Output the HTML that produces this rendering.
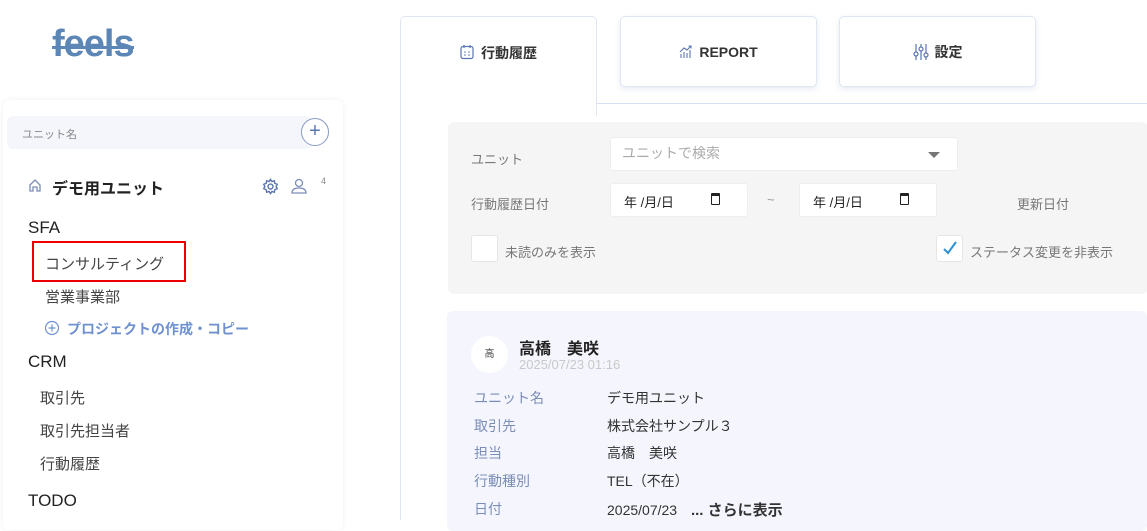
<!DOCTYPE html>
<html><head><meta charset="utf-8"><style>
*{box-sizing:border-box;margin:0;padding:0}
body{width:1147px;height:520px;overflow:hidden;background:#fff;font-family:"Liberation Sans","Noto Sans CJK JP",sans-serif;color:#333;position:relative}
.a{position:absolute;white-space:nowrap}
.side{position:absolute;left:3px;top:100px;width:340px;height:430px;background:#fff;border-radius:6px;box-shadow:0 0 6px rgba(0,0,0,.06)}
.tab{position:absolute;top:16px;width:197px;height:71px;background:#fff;border:1px solid #dfe6f2;border-radius:5px;box-shadow:0 2px 6px rgba(120,140,180,.18);font-size:14px;display:flex;align-items:center;justify-content:center;gap:6px;color:#333;font-weight:bold}
.lbl{color:#7a8db8;font-size:14px}
.val{font-size:14px;color:#333}
.inp{position:absolute;background:#fff;border:1px solid #eceef2;border-radius:3px}
</style></head><body>
<div class="a" style="left:52px;top:24px;font-size:38px;font-weight:bold;color:#5b86b5;letter-spacing:-1px;line-height:40px">feels</div>
<div class="a" style="left:52px;top:46px;width:82px;height:3px;background:#5b86b5"></div>

<div class="side">
 <div class="a" style="left:4px;top:16px;width:305px;height:33px;background:#f4f6fc;border-radius:6px"></div>
 <div class="a" style="left:19px;top:26px;font-size:11px;color:#888">ユニット名</div>
 <div class="a" style="left:298px;top:18px;width:28px;height:28px;border:1px solid #8a9cc6;border-radius:50%;background:#fff;color:#5b76b0;font-size:20px;text-align:center;line-height:25px">+</div>
 <svg class="a" style="left:25px;top:78px" width="14" height="14" viewBox="0 0 14 14"><path d="M2 7 L7 2 L12 7 V13 H9 V9 H5 V13 H2Z" fill="none" stroke="#7a8db8" stroke-width="1.3"/></svg>
 <div class="a" style="left:49px;top:75px;font-size:16px;font-weight:bold;color:#222">デモ用ユニット</div>
 <svg class="a" style="left:259px;top:78px" width="17" height="17" viewBox="0 0 24 24"><path d="M12 2 L14 5 L17.5 4 L18 7.5 L21.5 9 L20 12 L21.5 15 L18 16.5 L17.5 20 L14 19 L12 22 L10 19 L6.5 20 L6 16.5 L2.5 15 L4 12 L2.5 9 L6 7.5 L6.5 4 L10 5Z" fill="none" stroke="#5b76b0" stroke-width="2"/><circle cx="12" cy="12" r="3.5" fill="none" stroke="#5b76b0" stroke-width="2"/></svg>
 <svg class="a" style="left:287px;top:77px" width="18" height="18" viewBox="0 0 18 18"><circle cx="9" cy="6" r="3.5" fill="none" stroke="#7a8db8" stroke-width="1.3"/><path d="M2 16 Q2 11 9 11 Q16 11 16 16Z" fill="none" stroke="#7a8db8" stroke-width="1.3"/></svg>
 <div class="a" style="left:318px;top:76px;font-size:9px;color:#888">4</div>
 <div class="a" style="left:25px;top:118px;font-size:17px;color:#222">SFA</div>
 <div class="a" style="left:29px;top:141px;width:154px;height:41px;border:2px solid #e00"></div>
 <div class="a" style="left:42px;top:153px;font-size:15px;color:#444">コンサルティング</div>
 <div class="a" style="left:42px;top:186px;font-size:15px;color:#444">営業事業部</div>
 <svg class="a" style="left:41px;top:220px" width="16" height="16" viewBox="0 0 16 16"><circle cx="8" cy="8" r="6.5" fill="none" stroke="#6f92cf" stroke-width="1.2"/><path d="M8 4.5V11.5M4.5 8H11.5" stroke="#6f92cf" stroke-width="1.2"/></svg>
 <div class="a" style="left:64px;top:219px;font-size:14px;color:#6f92cf;font-weight:bold">プロジェクトの作成・コピー</div>
 <div class="a" style="left:25px;top:252px;font-size:17px;color:#222">CRM</div>
 <div class="a" style="left:37px;top:287px;font-size:15px;color:#444">取引先</div>
 <div class="a" style="left:37px;top:320px;font-size:15px;color:#444">取引先担当者</div>
 <div class="a" style="left:37px;top:353px;font-size:15px;color:#444">行動履歴</div>
 <div class="a" style="left:25px;top:391px;font-size:17px;color:#222">TODO</div>
</div>

<div class="a" style="left:400px;top:16px;width:197px;height:100px;background:#fff;border:1px solid #dfe6f2;border-bottom:none;border-radius:5px 5px 0 0"></div>
<div class="a" style="left:596px;top:103px;width:551px;height:1px;background:#d6e0f0"></div>
<div class="a" style="left:400px;top:116px;width:1px;height:404px;background:#dfe6f2"></div>
<svg class="a" style="left:460px;top:44px" width="14" height="16" viewBox="0 0 14 16"><rect x="1" y="2.5" width="12" height="12" rx="2" fill="none" stroke="#5b76b0" stroke-width="1.2"/><path d="M4 1V4M10 1V4" stroke="#5b76b0" stroke-width="1.2"/><circle cx="5" cy="8" r=".8" fill="#5b76b0"/><circle cx="9" cy="8" r=".8" fill="#5b76b0"/><circle cx="5" cy="11" r=".8" fill="#5b76b0"/><circle cx="9" cy="11" r=".8" fill="#5b76b0"/></svg>
<div class="a" style="left:481px;top:43px;font-size:14px;font-weight:bold;color:#333">行動履歴</div>
<div class="tab" style="left:620px"><svg width="14" height="14" viewBox="0 0 14 14"><path d="M2 13V9M5 13V7M8 13V8M11 13V5M1 7L5 3L8 5L12 1M9.5 1H12V3.5" fill="none" stroke="#5b76b0" stroke-width="1.1"/></svg>REPORT</div>
<div class="tab" style="left:839px"><svg width="16" height="18" viewBox="0 0 16 18"><path d="M3 1V17M8 1V17M13 1V17" stroke="#5b76b0" stroke-width="1.2"/><circle cx="3" cy="11" r="2" fill="#fff" stroke="#5b76b0" stroke-width="1.2"/><circle cx="8" cy="6" r="2" fill="#fff" stroke="#5b76b0" stroke-width="1.2"/><circle cx="13" cy="12" r="2" fill="#fff" stroke="#5b76b0" stroke-width="1.2"/></svg>設定</div>

<div class="a" style="left:448px;top:122px;width:700px;height:172px;background:#f5f5f5;border-radius:6px"></div>
<div class="a" style="left:471px;top:149px;font-size:13px;color:#777">ユニット</div>
<div class="inp" style="left:610px;top:137px;width:348px;height:34px"></div>
<div class="a" style="left:622px;top:143px;font-size:14px;color:#aaa">ユニットで検索</div>
<div class="a" style="left:928px;top:152px;width:0;height:0;border-left:6px solid transparent;border-right:6px solid transparent;border-top:6px solid #777"></div>
<div class="a" style="left:471px;top:194px;font-size:13px;color:#777">行動履歴日付</div>
<div class="inp" style="left:610px;top:183px;width:138px;height:34px"></div>
<div class="a" style="left:624px;top:192px;font-size:13px;color:#222">年 /月/日</div>
<div class="a" style="left:711px;top:193px;width:9px;height:12px;border:1.5px solid #222;border-top-width:3px;border-radius:1px"></div>
<div class="a" style="left:767px;top:192px;font-size:13px;color:#999">~</div>
<div class="inp" style="left:799px;top:183px;width:138px;height:34px"></div>
<div class="a" style="left:813px;top:192px;font-size:13px;color:#222">年 /月/日</div>
<div class="a" style="left:900px;top:193px;width:9px;height:12px;border:1.5px solid #222;border-top-width:3px;border-radius:1px"></div>
<div class="a" style="left:1017px;top:194px;font-size:13px;color:#777">更新日付</div>
<div class="a" style="left:471px;top:235px;width:27px;height:27px;background:#fff;border:1px solid #e6e6e6;border-radius:3px"></div>
<div class="a" style="left:505px;top:242px;font-size:13px;color:#777">未読のみを表示</div>
<div class="a" style="left:936px;top:235px;width:27px;height:27px;background:#fff;border:1px solid #e6e6e6;border-radius:3px"></div>
<svg class="a" style="left:942px;top:240px" width="16" height="16" viewBox="0 0 16 16"><path d="M2 9L6 13L14 2" fill="none" stroke="#2d8fd5" stroke-width="2"/></svg>
<div class="a" style="left:970px;top:242px;font-size:13px;color:#777">ステータス変更を非表示</div>

<div class="a" style="left:447px;top:311px;width:700px;height:220px;background:#f5f6fd;border-radius:6px"></div>
<div class="a" style="left:471px;top:336px;width:37px;height:37px;background:#fff;border-radius:50%;font-size:10px;text-align:center;line-height:37px;color:#444">高</div>
<div class="a" style="left:519px;top:335px;font-size:16px;font-weight:bold;color:#222">高橋　美咲</div>
<div class="a" style="left:519px;top:357px;font-size:13px;color:#c8c8c8">2025/07/23 01:16</div>
<div class="a lbl" style="left:474px;top:388px">ユニット名</div><div class="a val" style="left:607px;top:388px">デモ用ユニット</div>
<div class="a lbl" style="left:474px;top:416px">取引先</div><div class="a val" style="left:607px;top:416px">株式会社サンプル３</div>
<div class="a lbl" style="left:474px;top:443px">担当</div><div class="a val" style="left:607px;top:443px">高橋　美咲</div>
<div class="a lbl" style="left:474px;top:471px">行動種別</div><div class="a val" style="left:607px;top:471px">TEL（不在）</div>
<div class="a lbl" style="left:474px;top:499px">日付</div><div class="a val" style="left:607px;top:499px">2025/07/23 <b style="margin-left:10px;font-size:15px">... さらに表示</b></div>
</body></html>
